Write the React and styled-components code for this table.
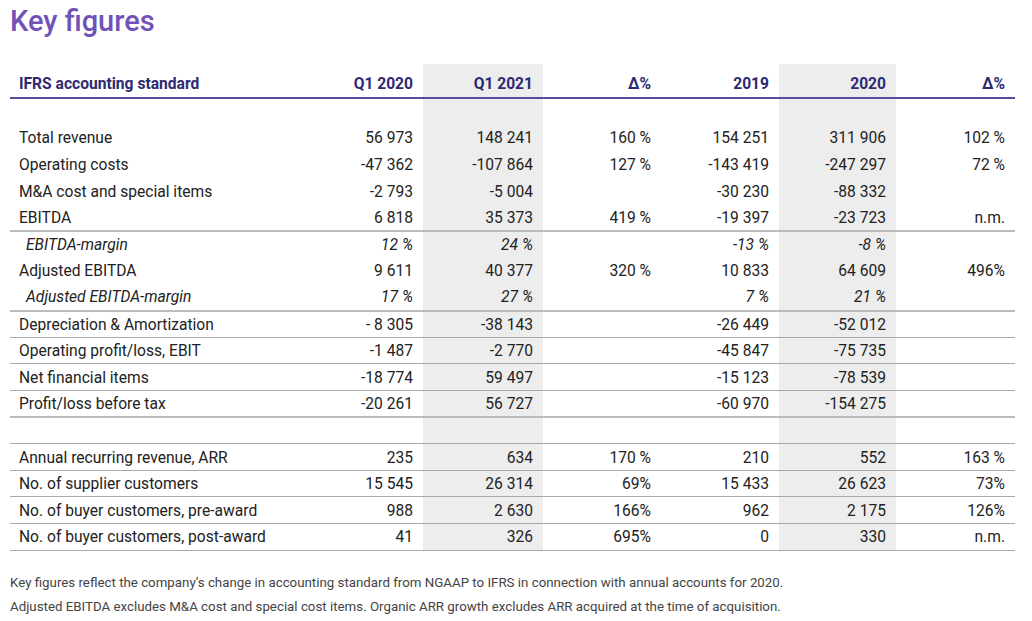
import React from "react";
import styled, { createGlobalStyle } from "styled-components";

const GlobalStyle = createGlobalStyle`
  html, body {
    margin: 0;
    padding: 0;
    background: #fff;
  }
  body {
    font-family: Roboto, "Liberation Sans", sans-serif;
    color: #222;
  }
`;

const columns = ["Q1 2020", "Q1 2021", "Δ%", "2019", "2020", "Δ%"];
const widths = [118, 120, 118, 118, 117, 119];
const shaded = [false, true, false, false, true, false];

const rows = [
  { label: "Total revenue", values: ["56 973", "148 241", "160 %", "154 251", "311 906", "102 %"] },
  { label: "Operating costs", values: ["-47 362", "-107 864", "127 %", "-143 419", "-247 297", "72 %"] },
  { label: "M&A cost and special items", values: ["-2 793", "-5 004", "", "-30 230", "-88 332", ""] },
  { label: "EBITDA", values: ["6 818", "35 373", "419 %", "-19 397", "-23 723", "n.m."], line: "thick" },
  { label: "EBITDA-margin", values: ["12 %", "24 %", "", "-13 %", "-8 %", ""], italic: true },
  { label: "Adjusted EBITDA", values: ["9 611", "40 377", "320 %", "10 833", "64 609", "496%"] },
  { label: "Adjusted EBITDA-margin", values: ["17 %", "27 %", "", "7 %", "21 %", ""], italic: true, line: "thick" },
  { label: "Depreciation & Amortization", values: ["- 8 305", "-38 143", "", "-26 449", "-52 012", ""], line: "thin" },
  { label: "Operating profit/loss, EBIT", values: ["-1 487", "-2 770", "", "-45 847", "-75 735", ""], line: "thin" },
  { label: "Net financial items", values: ["-18 774", "59 497", "", "-15 123", "-78 539", ""], line: "thin" },
  { label: "Profit/loss before tax", values: ["-20 261", "56 727", "", "-60 970", "-154 275", ""], line: "thick" },
  { label: "", values: ["", "", "", "", "", ""], line: "thin" },
  { label: "Annual recurring revenue, ARR", values: ["235", "634", "170 %", "210", "552", "163 %"], line: "thin" },
  { label: "No. of supplier customers", values: ["15 545", "26 314", "69%", "15 433", "26 623", "73%"], line: "thin" },
  { label: "No. of buyer customers, pre-award", values: ["988", "2 630", "166%", "962", "2 175", "126%"], line: "thin" },
  { label: "No. of buyer customers, post-award", values: ["41", "326", "695%", "0", "330", "n.m."], line: "thin" },
];

const Page = styled.div`
  width: 1032px;
  padding: 0 17px 0 10px;
  box-sizing: border-box;
`;

const Title = styled.h1`
  margin: 0;
  padding-top: 4px;
  font-size: 29px;
  line-height: 34px;
  font-weight: 500;
  color: #7152b8;
`;

const Table = styled.table`
  margin-top: 26px;
  border-collapse: collapse;
  table-layout: fixed;
  width: 1005px;
  font-size: 15.6px;
`;

const HeadCell = styled.th`
  height: 34px;
  box-sizing: border-box;
  padding: 0 10px 4px 9px;
  vertical-align: bottom;
  text-align: ${(p) => (p.$left ? "left" : "right")};
  font-weight: 700;
  font-size: 15.6px;
  color: #2d2a72;
  border-bottom: 2px solid #5b4b9e;
  background: ${(p) => (p.$shade ? "#ededed" : "transparent")};
`;

const Row = styled.tr`
  height: 26.6px;
  border-bottom: ${(p) =>
    p.$line === "thick" ? "2px solid #bcbcbc" : p.$line === "thin" ? "1px solid #a8a8a8" : "none"};
`;

const Cell = styled.td`
  padding: 1px 10px 0 ${(p) => (p.$indent ? "16px" : "9px")};
  text-align: ${(p) => (p.$left ? "left" : "right")};
  font-style: ${(p) => (p.$italic ? "italic" : "normal")};
  background: ${(p) => (p.$shade ? "#ededed" : "transparent")};
  white-space: nowrap;
  line-height: 18px;
`;

const Notes = styled.div`
  margin-top: 20px;
  font-size: 13.3px;
  line-height: 24px;
  color: #444;
`;

const App = () => {
  return (
    <>
      <GlobalStyle />
      <Page>
        <Title>Key figures</Title>
        <Table>
          <colgroup>
            <col style={{ width: 295 }} />
            {widths.map((w, i) => (
              <col key={i} style={{ width: w }} />
            ))}
          </colgroup>
          <thead>
            <tr>
              <HeadCell $left>IFRS accounting standard</HeadCell>
              {columns.map((c, i) => (
                <HeadCell key={i} $shade={shaded[i]}>
                  {c}
                </HeadCell>
              ))}
            </tr>
          </thead>
          <tbody>
            <Row>
              <Cell $left />
              {shaded.map((s, i) => (
                <Cell key={i} $shade={s} />
              ))}
            </Row>
            {rows.map((row, r) => (
              <Row key={r} $line={row.line}>
                <Cell $left $italic={row.italic} $indent={row.italic}>
                  {row.label}
                </Cell>
                {row.values.map((v, i) => (
                  <Cell key={i} $shade={shaded[i]} $italic={row.italic}>
                    {v}
                  </Cell>
                ))}
              </Row>
            ))}
          </tbody>
        </Table>
        <Notes>
          <div>
            Key figures reflect the company’s change in accounting standard from NGAAP to IFRS in connection with annual accounts for 2020.
          </div>
          <div>
            Adjusted EBITDA excludes M&A cost and special cost items. Organic ARR growth excludes ARR acquired at the time of acquisition.
          </div>
        </Notes>
      </Page>
    </>
  );
};

export default App;
